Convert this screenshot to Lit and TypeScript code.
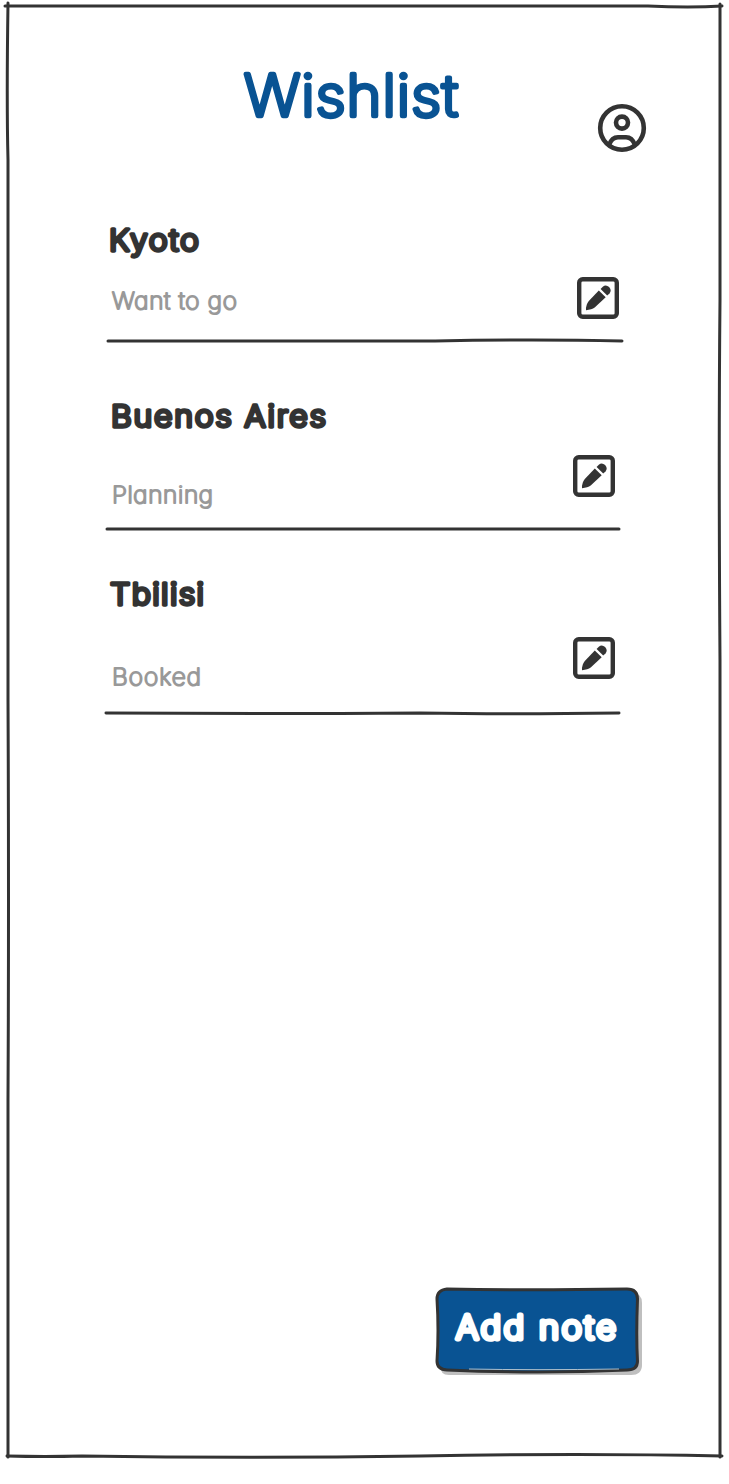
import { LitElement, html, css, svg } from "lit";
import { customElement, property } from "lit/decorators.js";

/** A word or two of lettering, drawn with a round pen and fitted to a set box. */
@customElement("pen-text")
class PenText extends LitElement {
  @property() text = "";
  @property({ type: Number }) width = 100;
  @property({ type: Number }) height = 30;
  @property({ type: Number }) pen = 2;
  @property({ type: Number }) stretch = 1;
  @property({ type: Number }) weight = 100;
  static styles = css`
    :host { display: block; line-height: 0; }
    svg { display: block; overflow: visible; }
    text {
      font-family: Inter, "Open Sans", sans-serif;
      font-feature-settings: "cv11";
      fill: currentColor;
      stroke: currentColor;
      stroke-linejoin: round;
      stroke-linecap: round;
    }
  `;
  render() {
    const { width, height, pen, stretch } = this;
    return html`<svg width=${width} height=${height}>
      <text transform="translate(0 ${height - pen / 2}) scale(${stretch} 1)"
        font-size=${(height - pen) / 0.727} font-weight=${this.weight} stroke-width=${pen}
        textLength=${width / stretch} lengthAdjust="spacing">${this.text}</text>
    </svg>`;
  }
}

interface Place { name: string; status: string; cls: string; nameW: number; statusW: number; line: string; }

const places: Place[] = [
  { name: "Kyoto", status: "Want to go", cls: "kyoto", nameW: 90, statusW: 125, line: "M108 5 L435 5 Q535 3 622 5" },
  { name: "Buenos Aires", status: "Planning", cls: "buenos", nameW: 215, statusW: 101, line: "M107 5 L619 5" },
  { name: "Tbilisi", status: "Booked", cls: "tbilisi", nameW: 94, statusW: 89, line: "M106 5 Q260 6 420 5 Q510 6.5 619 5" },
];

const pencil = svg`
  <rect x="2.2" y="2.2" width="37.6" height="37.6" rx="3.5" fill="none" stroke="#333" stroke-width="4.4"/>
  <path d="M21.8 13.4 L28.7 20.2 L17.7 30.6 Q14.8 33 9 33.2 Q8.6 28.2 11.8 24 Z" fill="#333"/>
  <path d="M23.6 11.9 L25.8 9.8 Q28.8 7.2 32.1 10.1 Q35.1 13.4 32.5 16.4 L30.2 18.5 Z" fill="#333"/>`;

@customElement("app-root")
class AppRoot extends LitElement {
  static styles = css`
    :host { display: block; background: #fff; color: #333; }
    .screen { display: grid; width: 729px; height: 1484px; overflow: hidden; }
    .frame, .page { grid-area: 1 / 1; }
    .frame { display: block; }
    .page { display: flex; flex-direction: column; }
    header { display: flex; height: 212px; }
    .title { margin: 72px 0 0 244px; color: #095393; width: 216px; }
    .user { margin: 103px 0 0 137px; }
    svg { display: block; }
    .row { display: flex; justify-content: space-between; flex: 1; }
    .place { display: flex; flex-direction: column; }
    .status { color: #999; }
    .kyoto { height: 134px; }
    .kyoto .row { padding: 15.5px 110px 0 109px; }
    .kyoto .status { margin: 38.5px 0 0 3px; }
    .kyoto .edit { margin-top: 49.5px; }
    .buenos { height: 188px; }
    .buenos .row { padding: 57.5px 114px 0 111px; }
    .buenos .status { margin: 56.5px 0 0 1px; }
    .buenos .edit { margin-top: 51.5px; }
    .tbilisi { height: 184px; }
    .tbilisi .row { padding: 47.5px 114px 0 110px; }
    .tbilisi .status { margin: 60.5px 0 0 2px; }
    .tbilisi .edit { margin-top: 55.5px; }
    .rule { height: 10px; flex: none; }
    button {
      display: grid; border: 0; padding: 0; background: none; color: #fff;
      width: 210px; height: 92px; margin: 568px 0 0 434px;
    }
    button > * { grid-area: 1 / 1; }
    .label { margin: 27px 0 0 22px; justify-self: start; align-self: start; }
  `;
  render() {
    return html`<div class="screen">
      <svg class="frame" width="729" height="1484" fill="none" stroke="#333" stroke-width="3" stroke-linecap="round">
        <path d="M5 6 L648 6 Q690 8 722 6"/>
        <path d="M8 3 Q6.5 100 8 160 Q8.5 250 8 400 Q7.5 520 8 700 Q9 900 8 1100 L8 1457"/>
        <path d="M720 4 L720 300 Q718.5 450 720 660 Q720.5 850 720 1100 L720 1457"/>
        <path d="M7 1456 Q45 1457 82 1456 Q250 1458.5 420 1456 Q580 1453 722 1456"/>
      </svg>
      <div class="page">
        <header>
          <pen-text class="title" text="Wishlist" width="214" height="46" pen="4.4" stretch="1.04" weight="200"></pen-text>
          <svg class="user" width="50" height="50" viewBox="0 0 50 50" fill="none" stroke="#333" stroke-width="4.6">
            <circle cx="25" cy="25" r="21.8"/><circle cx="25" cy="19.6" r="6"/>
            <path d="M12 42 C14 36.5 17 34.2 21 34.2 H29 C33 34.2 36 36.5 38 42"/>
          </svg>
        </header>
        ${places.map((p) => html`<section class="place ${p.cls}">
          <div class="row">
            <div>
              <pen-text class="name" .text=${p.name} .width=${p.nameW} .height=${25} .pen=${3.3} .stretch=${1.07} .weight=${300}></pen-text>
              <pen-text class="status" .text=${p.status} .width=${p.statusW} .height=${19} .pen=${2.1} .stretch=${1.05}></pen-text>
            </div>
            <svg class="edit" width="42" height="42" viewBox="0 0 42 42">${pencil}</svg>
          </div>
          <svg class="rule" width="729" height="10" fill="none" stroke="#333" stroke-width="3" stroke-linecap="round"><path d=${p.line}/></svg>
        </section>`)}
        <button>
          <svg width="210" height="92">
            <path d="M15 7 H198 Q208 7 208 17 V79 Q208 89 197 89 H15 Q6 89 6 79 V17 Q6 7 15 7Z" fill="#bfbfbf"/>
            <path d="M13 3 Q90 4.5 193 3 Q203.5 3 203.5 13 Q202 50 203.5 75 Q203.5 84 193 84 Q105 88 13 84 Q3 83.5 3 75 Q5 45 3 13 Q3 4 13 3Z" fill="#095393" stroke="#333" stroke-width="3"/>
            <path d="M35 83 Q100 84.3 185 83" fill="none" stroke="#aebfcb" stroke-width="1"/>
          </svg>
          <pen-text class="label" text="Add note" width="160" height="28" pen="4.8" stretch="1.07" weight="200"></pen-text>
        </button>
      </div>
    </div>`;
  }
}
